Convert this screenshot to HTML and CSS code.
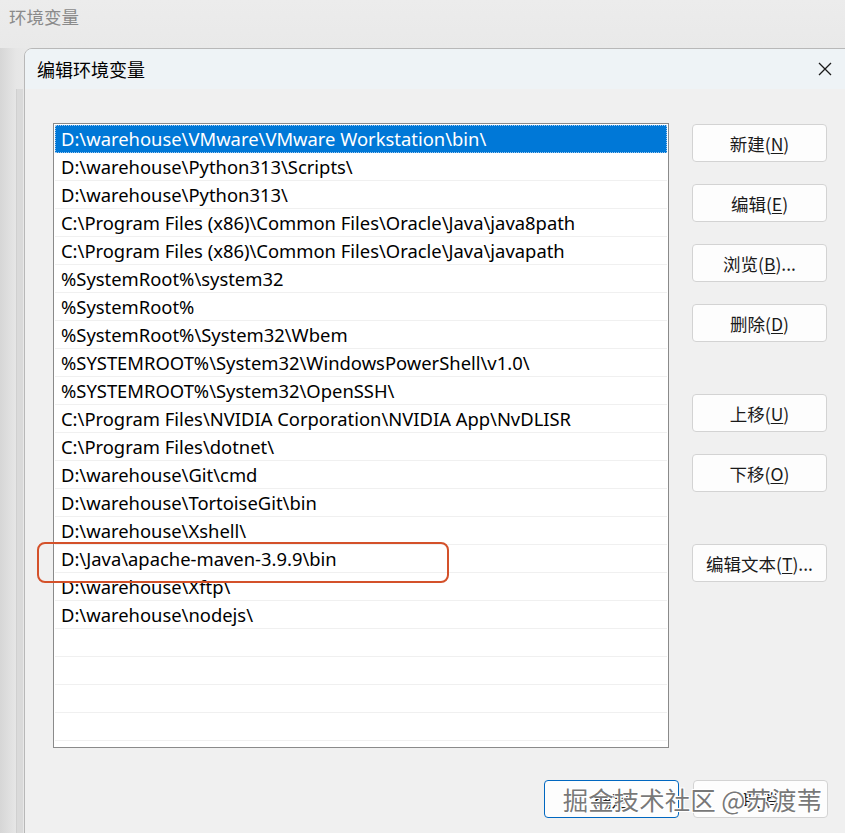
FILE: index.html
```html
<!DOCTYPE html>
<html lang="zh-CN">
<head>
    <meta charset="UTF-8">
    <title>编辑环境变量</title>
    <link rel="stylesheet" href="styles.css">
</head>
<body>
    <div class="backdrop">
        <div class="back-title">环境变量</div>
        <div class="back-frame"></div>

        <!-- 编辑环境变量对话框 -->
        <div class="dialog">
            <div class="title-bar">
                <span class="title">编辑环境变量</span>
                <span class="close">
                    <svg width="14" height="14" viewBox="0 0 14 14"><path d="M1 1 L13 13 M13 1 L1 13" stroke="#1a1a1a" stroke-width="1.3" fill="none"/></svg>
                </span>
            </div>
            <div class="dialog-body">
                <div class="main-row">
                    <div class="path-list">
                        <div class="row selected">D:\warehouse\VMware\VMware Workstation\bin\</div>
                        <div class="row">D:\warehouse\Python313\Scripts\</div>
                        <div class="row">D:\warehouse\Python313\</div>
                        <div class="row">C:\Program Files (x86)\Common Files\Oracle\Java\java8path</div>
                        <div class="row">C:\Program Files (x86)\Common Files\Oracle\Java\javapath</div>
                        <div class="row">%SystemRoot%\system32</div>
                        <div class="row">%SystemRoot%</div>
                        <div class="row">%SystemRoot%\System32\Wbem</div>
                        <div class="row">%SYSTEMROOT%\System32\WindowsPowerShell\v1.0\</div>
                        <div class="row">%SYSTEMROOT%\System32\OpenSSH\</div>
                        <div class="row">C:\Program Files\NVIDIA Corporation\NVIDIA App\NvDLISR</div>
                        <div class="row">C:\Program Files\dotnet\</div>
                        <div class="row">D:\warehouse\Git\cmd</div>
                        <div class="row">D:\warehouse\TortoiseGit\bin</div>
                        <div class="row">D:\warehouse\Xshell\</div>
                        <div class="row">D:\Java\apache-maven-3.9.9\bin</div>
                        <div class="row">D:\warehouse\Xftp\</div>
                        <div class="row">D:\warehouse\nodejs\</div>
                        <div class="row"></div>
                        <div class="row"></div>
                        <div class="row"></div>
                        <div class="row"></div>
                        <div class="row last"></div>
                        <div class="mark"></div>
                    </div>
                    <div class="side-buttons">
                        <div class="group">
                            <button class="btn">新建(<u>N</u>)</button>
                            <button class="btn">编辑(<u>E</u>)</button>
                            <button class="btn">浏览(<u>B</u>)...</button>
                            <button class="btn">删除(<u>D</u>)</button>
                        </div>
                        <div class="group">
                            <button class="btn">上移(<u>U</u>)</button>
                            <button class="btn">下移(<u>O</u>)</button>
                        </div>
                        <div class="group">
                            <button class="btn">编辑文本(<u>T</u>)...</button>
                        </div>
                    </div>
                </div>
                <div class="footer">
                    <button class="btn default">确定</button>
                    <button class="btn">取消</button>
                    <div class="watermark">掘金技术社区 @苏渡苇</div>
                </div>
            </div>
        </div>
    </div>
</body>
</html>
```

FILE: styles.css
```css
body {
    margin: 0;
    width: 845px;
    height: 833px;
    overflow: hidden;
    font-family: "Noto Sans CJK SC", "Noto Sans", sans-serif;
    background: linear-gradient(to right, #d6d6d6 0px, #e6e6e6 16px, #ececec 40px);
}
.backdrop {
    position: relative;
    height: 833px;
    background: linear-gradient(to bottom, #ececec 0px, #e9e9e9 48px, transparent 48px);
}
.back-title {
    padding: 4px 0 0 9px;
    height: 38px;
    font-size: 17.5px;
    color: #8a8a8a;
}
.back-frame {
    position: absolute;
    left: 16px;
    top: 89px;
    width: 6px;
    height: 744px;
    border-left: 1px solid #d0d0d0;
    background: #dadada;
}
.dialog {
    position: relative;
    margin: 6px 0 0 24px;
    width: 830px;
    height: 800px;
    border: 1px solid #b8b8b8;
    border-radius: 8px 8px 0 0;
    background: #f0f0f0;
    overflow: hidden;
}
.title-bar {
    display: flex;
    align-items: center;
    justify-content: space-between;
    height: 40px;
    padding-left: 12px;
    background: #eef3f6;
}
.title {
    font-size: 18px;
    color: #000;
}
.close {
    display: flex;
    align-items: center;
    justify-content: center;
    width: 46px;
    height: 40px;
    margin-right: 7px;
}
.dialog-body {
    padding: 34px 0 0 28px;
}
.main-row {
    display: flex;
    gap: 23px;
}
.path-list {
    position: relative;
    width: 612px;
    height: 621px;
    border: 1px solid #8a8a8a;
    background: #fff;
    padding: 1px;
}
.row {
    height: 27px;
    border-bottom: 1px solid #f0f0f0;
    padding-left: 6px;
    font-family: "Noto Sans", "Noto Sans CJK SC", sans-serif;
    font-size: 18.4px;
    line-height: 27px;
    color: #000;
    white-space: nowrap;
}
.row.selected {
    background: #0078d7;
    color: #fff;
    border-bottom-color: #0078d7;
    outline: 1px dotted #9ec9ef;
    outline-offset: -1px;
}
.mark {
    position: absolute;
    left: -17px;
    top: 418px;
    width: 408px;
    height: 37px;
    border: 2px solid #d4512a;
    border-radius: 8px;
}
.side-buttons {
    display: flex;
    flex-direction: column;
    gap: 52px;
    padding-top: 1px;
}
.group {
    display: flex;
    flex-direction: column;
    gap: 22px;
}
.btn {
    width: 135px;
    height: 38px;
    padding: 0;
    background: #fdfdfd;
    border: 1px solid #d3d3d3;
    border-radius: 4px;
    font-family: "Noto Sans CJK SC", "Noto Sans", sans-serif;
    font-size: 17.5px;
    color: #1a1a1a;
}
.btn u {
    text-underline-offset: 2px;
}
.footer {
    position: relative;
    display: flex;
    justify-content: flex-end;
    gap: 14px;
    width: 775px;
    margin-top: 32px;
}
.btn.default {
    border: 1px solid #0067c0;
}
.watermark {
    position: absolute;
    right: 6px;
    top: 0;
    font-size: 25.5px;
    color: rgba(95, 95, 95, 0.85);
    text-shadow: 0 0 2px #fff, 1px 1px 0 #fff, -1px -1px 0 #fff, 1px -1px 0 #fff, -1px 1px 0 #fff;
    white-space: nowrap;
}
```
